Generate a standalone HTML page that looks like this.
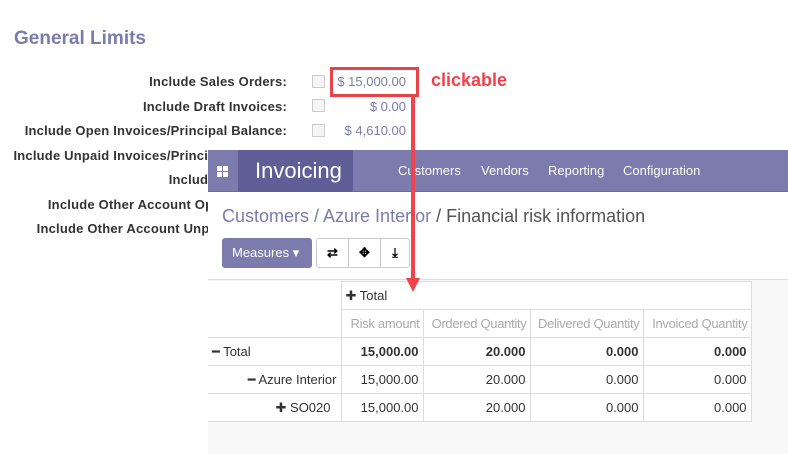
<!DOCTYPE html>
<html><head><meta charset="utf-8"><style>
*{margin:0;padding:0;box-sizing:border-box}
body{width:788px;height:454px;position:relative;overflow:hidden;background:#fff;font-family:"Liberation Sans",sans-serif;}
.a{position:absolute;white-space:nowrap}
.h{left:14px;top:28px;font-size:19px;font-weight:bold;color:#7c7bad}
.lbl{right:501px;font-size:13px;font-weight:bold;color:#333;letter-spacing:0.2px}
.cb{left:312px;width:13px;height:13px;border:1px solid #ccc;background:#f5f5f5}
.val{right:382px;font-size:13px;color:#7c7bad}
#pan{position:absolute;left:208px;top:150px;width:580px;height:304px;background:#f8f8f8}
.nav{position:absolute;left:0;top:0;width:580px;height:42px;background:#7c7bad;border-bottom:1px solid #6a699b}
.app{position:absolute;left:30px;top:0;width:115px;height:42px;background:#5f5e97;color:#fff;font-size:22px;line-height:42px;padding-left:17px}
.mi{position:absolute;top:13px;color:#fff;font-size:13px}
.top{position:absolute;left:0;top:42px;width:580px;height:88px;background:#fff;border-bottom:1px solid #ddd}
table{position:absolute;left:0;top:131px;border-collapse:collapse;background:#fff;font-size:13px;color:#333;table-layout:fixed;width:543px}
td{border:1px solid #ddd;height:28px;padding:0 4px;text-align:right;white-space:nowrap;overflow:hidden}
.mh td{color:#aaa;letter-spacing:-0.3px;padding:0 3px}
</style></head><body>
<div class="a h">General Limits</div>
<div class="a lbl" style="top:74px">Include Sales Orders:</div>
<div class="a lbl" style="top:99px">Include Draft Invoices:</div>
<div class="a lbl" style="top:123px">Include Open Invoices/Principal Balance:</div>
<div class="a lbl" style="top:148px">Include Unpaid Invoices/Principal Balance:</div>
<div class="a lbl" style="top:172px">Include Payments:</div>
<div class="a lbl" style="top:197px">Include Other Account Open Amount:</div>
<div class="a lbl" style="top:221px">Include Other Account Unpaid Amount:</div>
<div class="a cb" style="top:75px"></div><div class="a cb" style="top:99px"></div><div class="a cb" style="top:124px"></div>
<div class="a val" style="top:74px">$ 15,000.00</div>
<div class="a val" style="top:99px">$ 0.00</div>
<div class="a val" style="top:123px">$ 4,610.00</div>
<div class="a" style="left:330px;top:67px;width:89px;height:30px;border:3px solid #e8424a"></div>
<div class="a" style="left:431px;top:70px;font-size:18px;font-weight:bold;color:#f0434b">clickable</div>
<div id="pan">
<div class="nav">
<div class="a" style="left:9px;top:16px;width:11px;height:11px;display:grid;grid-template-columns:5px 5px;gap:1px"><i style="background:#fff"></i><i style="background:#fff"></i><i style="background:#fff"></i><i style="background:#fff"></i></div>
<div class="app">Invoicing</div>
<div class="mi" style="left:190px">Customers</div><div class="mi" style="left:273px">Vendors</div><div class="mi" style="left:340px">Reporting</div><div class="mi" style="left:415px">Configuration</div>
</div>
<div class="top">
<div class="a" style="left:14px;top:14px;font-size:18px;color:#555"><span style="color:#7c7bad">Customers / Azure Interior</span> / Financial risk information</div>
<div class="a" style="left:14px;top:46px;width:90px;height:30px;background:#7c7bad;border-radius:3px;color:#fff;font-size:13px;line-height:30px;padding-left:10px">Measures ▾</div>
<div class="a" style="left:108px;top:46px;width:94px;height:30px;border:1px solid #ccc;border-radius:3px;display:flex;font-size:13px;font-weight:bold">
<div style="width:32px;border-right:1px solid #ccc;text-align:center;line-height:28px">⇄</div><div style="width:32px;border-right:1px solid #ccc;text-align:center;line-height:28px">✥</div><div style="flex:1;text-align:center;line-height:28px">⤓</div></div>
</div>
<table>
<colgroup><col style="width:133px"><col style="width:82px"><col style="width:107px"><col style="width:113px"><col style="width:108px"></colgroup>
<tr><td style="border:none;border-right:1px solid #ddd;height:27px"></td><td colspan="4" style="text-align:left">✚ Total</td></tr>
<tr class="mh"><td style="border:none;border-right:1px solid #ddd"></td><td>Risk amount</td><td>Ordered Quantity</td><td>Delivered Quantity</td><td>Invoiced Quantity</td></tr>
<tr style="font-weight:bold"><td style="text-align:left;font-weight:normal;border-left:none">━ Total</td><td>15,000.00</td><td>20.000</td><td>0.000</td><td>0.000</td></tr>
<tr><td style="border-left:none">━ Azure Interior</td><td>15,000.00</td><td>20.000</td><td>0.000</td><td>0.000</td></tr>
<tr><td style="border-left:none;padding-right:10px">✚ SO020</td><td>15,000.00</td><td>20.000</td><td>0.000</td><td>0.000</td></tr>
</table>
</div>
<div class="a" style="left:411px;top:97px;width:4px;height:183px;background:#f0434b"></div>
<div class="a" style="left:406px;top:278px;width:0;height:0;border-left:7px solid transparent;border-right:7px solid transparent;border-top:14px solid #f0434b"></div>
</body></html>
